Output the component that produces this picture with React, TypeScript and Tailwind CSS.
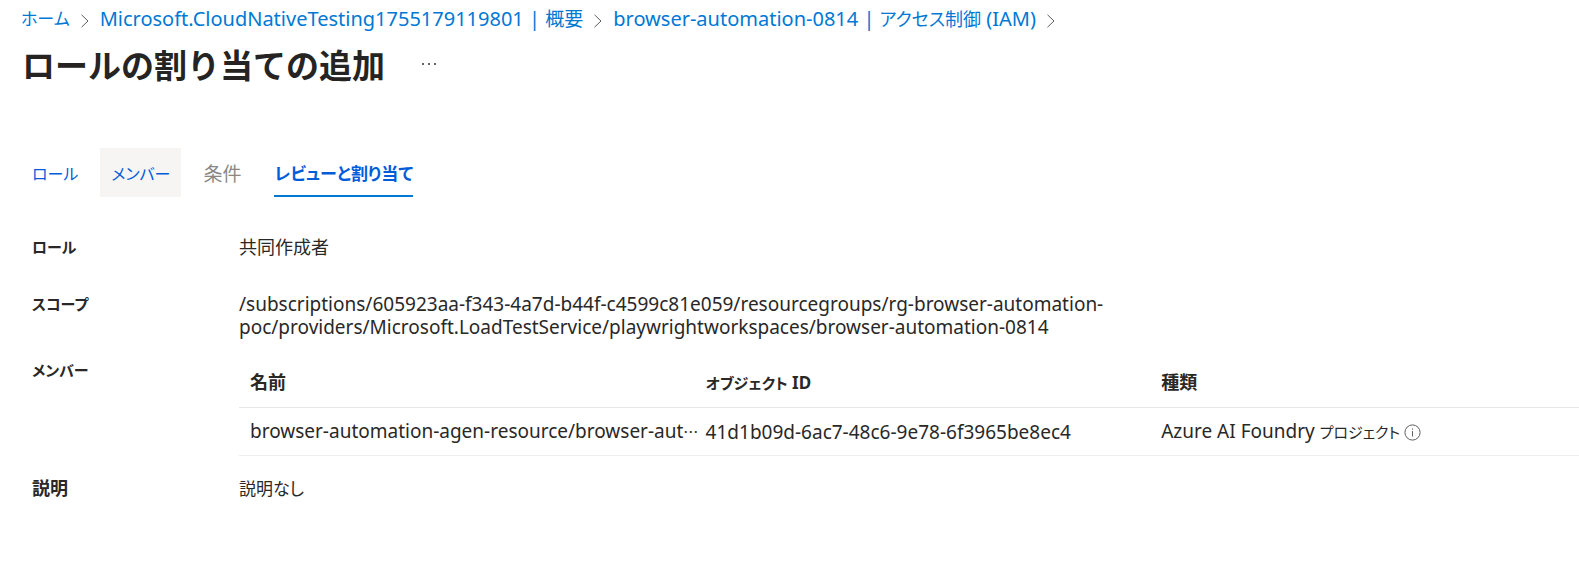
import React from "react";

const latinFirst =
  "font-['Noto_Sans','Noto_Sans_CJK_JP',sans-serif] [font-feature-settings:'palt']";

function Chevron() {
  return (
    <svg className="mt-1 h-3.5 w-2.5 shrink-0" viewBox="0 0 10 14" fill="none" stroke="#605e5c" aria-hidden="true">
      <path d="M1.5 0.8 8 7 1.5 13.2" />
    </svg>
  );
}

function InfoIcon() {
  return (
    <svg className="size-[17px] shrink-0" viewBox="0 0 17 17" fill="none" stroke="#605e5c" aria-hidden="true">
      <circle cx="8.5" cy="8.5" r="7.6" />
      <path d="M8.5 7v5.5M8.5 4.4v1.3" />
    </svg>
  );
}

function Crumb({ children }: { children: React.ReactNode }) {
  return (
    <li className="flex items-center gap-2.5 pr-2.5 whitespace-nowrap">
      <a href="#" className="text-[#0078d4]">
        {children}
      </a>
      <Chevron />
    </li>
  );
}

function Row({ label, children }: { label: string; children: React.ReactNode }) {
  return (
    <>
      <dt className="text-[15px] font-bold">{label}</dt>
      <dd className="min-w-0">{children}</dd>
    </>
  );
}

export default function App() {
  return (
    <main lang="ja" className={`min-h-screen bg-white text-[19px] leading-[23px] text-[#292827] ${latinFirst}`}>
      <nav aria-label="階層" className="pl-[21px] pt-1">
        <ol className="flex items-center text-[20px] leading-7">
          <Crumb>
            <span className="text-[17px]">ホーム</span>
          </Crumb>
          <Crumb>
            Microsoft.CloudNativeTesting1755179119801 | <span className="text-[19px]">概要</span>
          </Crumb>
          <Crumb>
            browser-automation-0814 | <span className="text-[18px]">アクセス制御</span> (IAM)
          </Crumb>
        </ol>
      </nav>

      <header className="flex items-center gap-[34px] pl-[22px] pt-1.5">
        <h1 className="font-['Noto_Sans_CJK_JP',sans-serif] text-[33px] leading-[50px] font-bold text-[#252423] [font-feature-settings:normal]">
          ロールの割り当ての追加
        </h1>
        <button type="button" aria-label="その他" className="flex h-6 w-5 items-center justify-center">
          <svg className="h-1 w-4" viewBox="0 0 16 4" fill="#323130" aria-hidden="true">
            <circle cx="2" cy="2" r="1" />
            <circle cx="8" cy="2" r="1" />
            <circle cx="14" cy="2" r="1" />
          </svg>
        </button>
      </header>

      <div role="tablist" className="mt-[59px] flex h-[49px] gap-[11px] pl-[21px] text-[16px]">
        <button type="button" role="tab" aria-selected="false" className="px-[11px] pt-1 text-[#015cda]">
          ロール
        </button>
        <button type="button" role="tab" aria-selected="false" className="bg-[#f6f5f4] px-[11px] pt-1 text-[#015cda]">
          メンバー
        </button>
        <button type="button" role="tab" aria-selected="false" disabled className="px-[11px] pt-1 text-[19px] text-[#8a8886]">
          条件
        </button>
        <button type="button" role="tab" aria-selected="true" className="mx-[11px] border-b-2 border-[#0078d4] pt-1 text-[17px] font-bold text-[#015cda]">
          レビューと割り当て
        </button>
      </div>

      <dl className="grid grid-cols-[207px_1fr] pl-8 pt-[39px]">
        <Row label="ロール">
          <p className="pb-[34px] text-[18px]">共同作成者</p>
        </Row>
        <Row label="スコープ">
          <p className="max-w-[880px] pb-5">
            /subscriptions/605923aa-f343-4a7d-b44f-c4599c81e059/resourcegroups/rg-browser-automation-poc/providers/Microsoft.LoadTestService/playwrightworkspaces/browser-automation-0814
          </p>
        </Row>
        <Row label="メンバー">
          <table className="w-full table-fixed text-left">
            <thead>
              <tr className="h-12 border-b border-[#e8e7e6]">
                <th className="w-[34%] pl-[11px] text-[18px] font-bold">名前</th>
                <th className="w-[34%] pl-[11px] text-[17px] font-bold">
                  <span className="text-[15px]">オブジェクト</span> ID
                </th>
                <th className="pl-[11px] text-[18px] font-bold">種類</th>
              </tr>
            </thead>
            <tbody>
              <tr className="h-12 border-b border-[#f0efee]">
                <td className="pt-0.5 pl-[11px] whitespace-nowrap">
                  browser-automation-agen-resource/browser-aut
                  <span className="text-[15px]">⋯</span>
                </td>
                <td className="pt-0.5 pl-[11px]">41d1b09d-6ac7-48c6-9e78-6f3965be8ec4</td>
                <td className="pt-0.5 pl-[11px]">
                  <span className="flex items-center gap-1">
                    <span>
                      Azure AI Foundry <span className="text-[15px]">プロジェクト</span>
                    </span>
                    <InfoIcon />
                  </span>
                </td>
              </tr>
            </tbody>
          </table>
        </Row>
        <dt className="pt-[21px] text-[18px] font-bold">説明</dt>
        <dd className="pt-[21px] text-[17px]">説明なし</dd>
      </dl>
    </main>
  );
}
